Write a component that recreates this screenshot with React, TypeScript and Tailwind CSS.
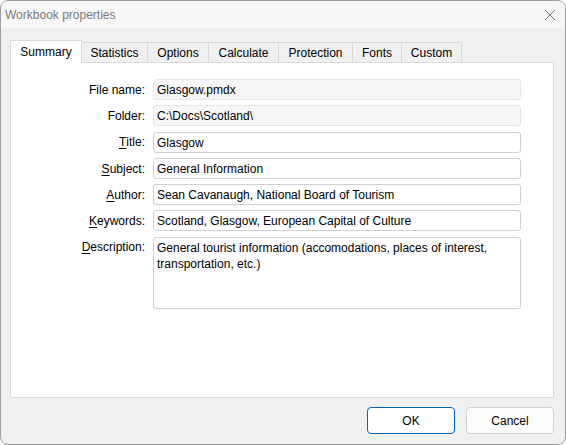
import React from "react";

const tabs = [
  { name: "Summary", w: "w-[72px]" },
  { name: "Statistics", w: "w-[66px]" },
  { name: "Options", w: "w-[61px]" },
  { name: "Calculate", w: "w-[70px]" },
  { name: "Protection", w: "w-[74px]" },
  { name: "Fonts", w: "w-[49px]" },
  { name: "Custom", w: "w-[60px]" },
];

function Label({ text, u, top }: { text: string; u?: number; top?: boolean }) {
  const body =
    u === undefined ? (
      text
    ) : (
      <>
        {text.slice(0, u)}
        <span className="underline underline-offset-2">{text[u]}</span>
        {text.slice(u + 1)}
      </>
    );
  return (
    <div className={`flex justify-end pr-[8px] ${top ? "items-start pt-[2px]" : "items-center"}`}>
      {body}:
    </div>
  );
}

function Field({ value, readOnly, className = "" }: { value: string; readOnly?: boolean; className?: string }) {
  return (
    <div
      className={`flex h-[21px] items-center rounded-[3px] border px-[3px] ${
        readOnly ? "border-[#e6e6e6] bg-[#f7f7f7]" : "border-[#cfcfcf] bg-white"
      } ${className}`}
    >
      {value}
    </div>
  );
}

export default function App() {
  return (
    <div
      className="flex h-[445px] w-[566px] flex-col overflow-hidden rounded-lg border border-[#9c9c9c] bg-[#f0f0f0] text-[12px] text-black"
      style={{ fontFamily: '"Segoe UI", "Liberation Sans", Arial, sans-serif' }}
    >
      {/* Title bar */}
      <div className="flex h-[27px] shrink-0 items-center justify-between bg-[#f7f7f7] pl-[4px] pr-[9px]">
        <span className="text-[#7a7a7a]">Workbook properties</span>
        <svg width="12" height="12" viewBox="0 0 12 12" className="text-[#777]">
          <path d="M1 1 L11 11 M11 1 L1 11" stroke="currentColor" strokeWidth="1" />
        </svg>
      </div>

      <div className="flex flex-1 flex-col px-[9px] pt-[12px]">
        {/* Tabs */}
        <div className="flex h-[22px] items-end">
          {tabs.map((t, i) =>
            i === 0 ? (
              <div
                key={t.name}
                className={`relative z-10 -mb-[1px] flex h-[23px] ${t.w} items-center justify-center border border-b-0 border-[#d9d9d9] bg-white`}
              >
                {t.name}
              </div>
            ) : (
              <div
                key={t.name}
                className={`flex h-[20px] ${t.w} items-center justify-center border border-l-0 border-b-0 border-[#d9d9d9] bg-[#f0f0f0]`}
              >
                {t.name}
              </div>
            )
          )}
        </div>

        {/* Panel */}
        <div className="h-[336px] w-[544px] border border-[#d9d9d9] bg-white pt-[16px]">
          <div className="grid grid-cols-[142px_368px] gap-y-[5px]">
            <Label text="File name" />
            <Field value="Glasgow.pmdx" readOnly />
            <Label text="Folder" />
            <Field value="C:\Docs\Scotland\" readOnly />
            <Label text="Title" u={0} />
            <Field value="Glasgow" className="mt-[1px]" />
            <Label text="Subject" u={0} />
            <Field value="General Information" />
            <Label text="Author" u={0} />
            <Field value="Sean Cavanaugh, National Board of Tourism" />
            <Label text="Keywords" u={0} />
            <Field value="Scotland, Glasgow, European Capital of Culture" />
            <Label text="Description" u={0} top />
            <div className="mt-[1px] h-[72px] rounded-[3px] border border-[#cfcfcf] bg-white px-[3px] pt-[2px] leading-[16px]">
              General tourist information (accomodations, places of interest, transportation, etc.)
            </div>
          </div>
        </div>

        {/* Buttons */}
        <div className="mt-[9px] flex justify-end gap-[11px] pr-[2px]">
          <button className="flex h-[27px] w-[88px] items-center justify-center rounded-[4px] border border-[#0067c0] bg-white">
            OK
          </button>
          <button className="flex h-[27px] w-[88px] items-center justify-center rounded-[4px] border border-[#d0d0d0] bg-[#fbfbfb]">
            Cancel
          </button>
        </div>
      </div>
    </div>
  );
}
